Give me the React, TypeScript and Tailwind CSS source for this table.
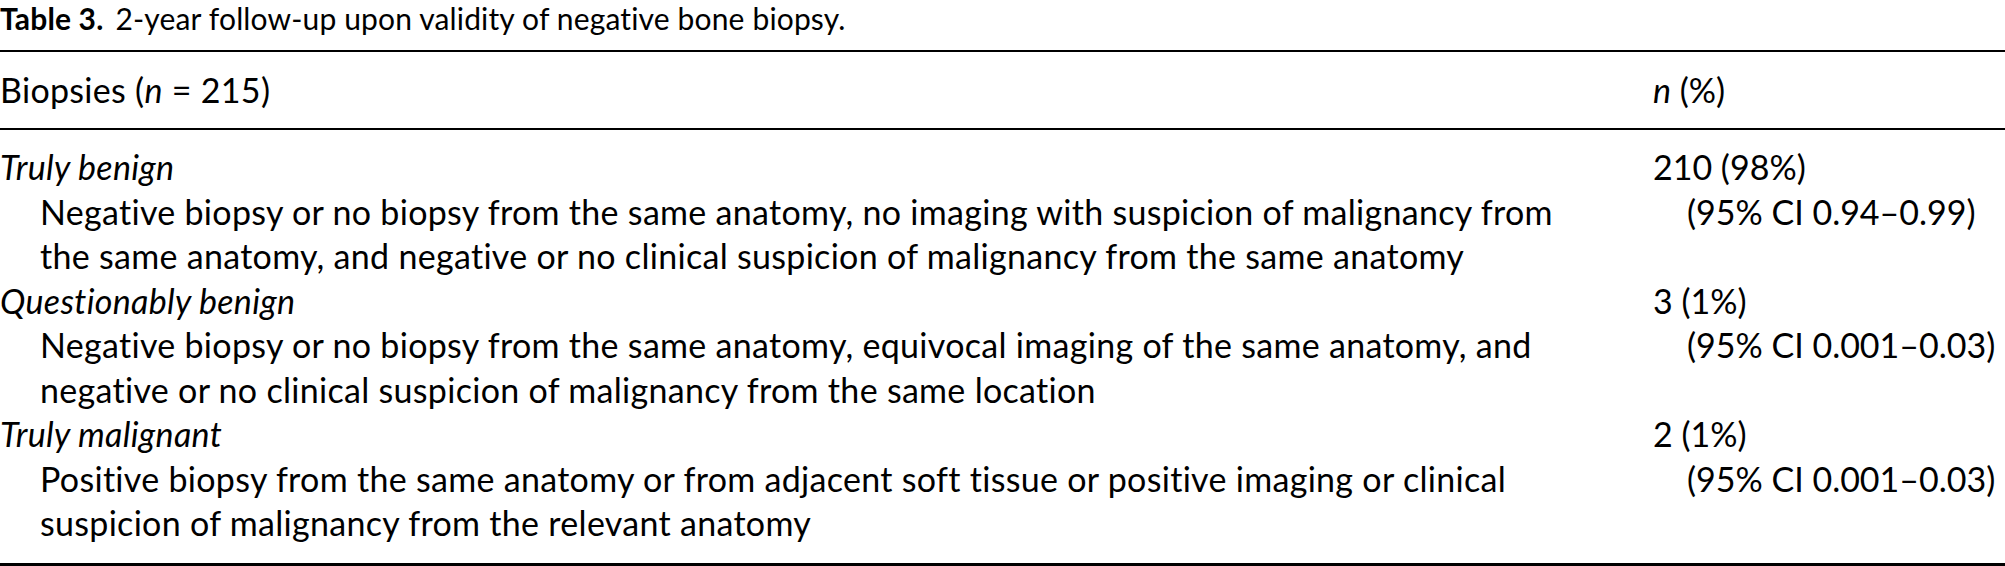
const rows = [
  {
    label: "Truly benign",
    value: "210 (98%)",
    ci: "(95% CI 0.94–0.99)",
    lines: [
      "Negative biopsy or no biopsy from the same anatomy, no imaging with suspicion of malignancy from",
      "the same anatomy, and negative or no clinical suspicion of malignancy from the same anatomy",
    ],
  },
  {
    label: "Questionably benign",
    value: "3 (1%)",
    ci: "(95% CI 0.001–0.03)",
    lines: [
      "Negative biopsy or no biopsy from the same anatomy, equivocal imaging of the same anatomy, and",
      "negative or no clinical suspicion of malignancy from the same location",
    ],
  },
  {
    label: "Truly malignant",
    value: "2 (1%)",
    ci: "(95% CI 0.001–0.03)",
    lines: [
      "Positive biopsy from the same anatomy or from adjacent soft tissue or positive imaging or clinical",
      "suspicion of malignancy from the relevant anatomy",
    ],
  },
];

export default function App() {
  return (
    <div className="w-[2005px] h-[566px] overflow-hidden bg-white text-black font-['Lato',sans-serif] text-[34px] tracking-[0.3px]">
      <div className="h-[36px] leading-[36px] text-[30px] tracking-[0.15px] whitespace-nowrap">
        <span className="font-bold">Table 3.</span>
        <span className="ml-3">2-year follow-up upon validity of negative bone biopsy.</span>
      </div>

      <div className="mt-[14px] border-t-2 border-black" />

      <div className="grid grid-cols-[1653px_1fr] pt-[16px] pb-[15.5px] leading-[44.5px]">
        <div>
          Biopsies (<i>n</i> = 215)
        </div>
        <div className="tracking-normal">
          <i>n</i> (%)
        </div>
      </div>

      <div className="border-t-2 border-black" />

      <div className="grid grid-cols-[1653px_1fr] pt-[15px] pb-[17.5px] leading-[44.5px] whitespace-nowrap">
        {rows.map((row) => (
          <div key={row.label} className="contents">
            <div className="italic">{row.label}</div>
            <div className="tracking-normal">{row.value}</div>
            <div className="pl-10">{row.lines[0]}</div>
            <div className="pl-[34px] tracking-normal">{row.ci}</div>
            <div className="pl-10">{row.lines[1]}</div>
            <div />
          </div>
        ))}
      </div>

      <div className="border-t-[3px] border-black" />
    </div>
  );
}
